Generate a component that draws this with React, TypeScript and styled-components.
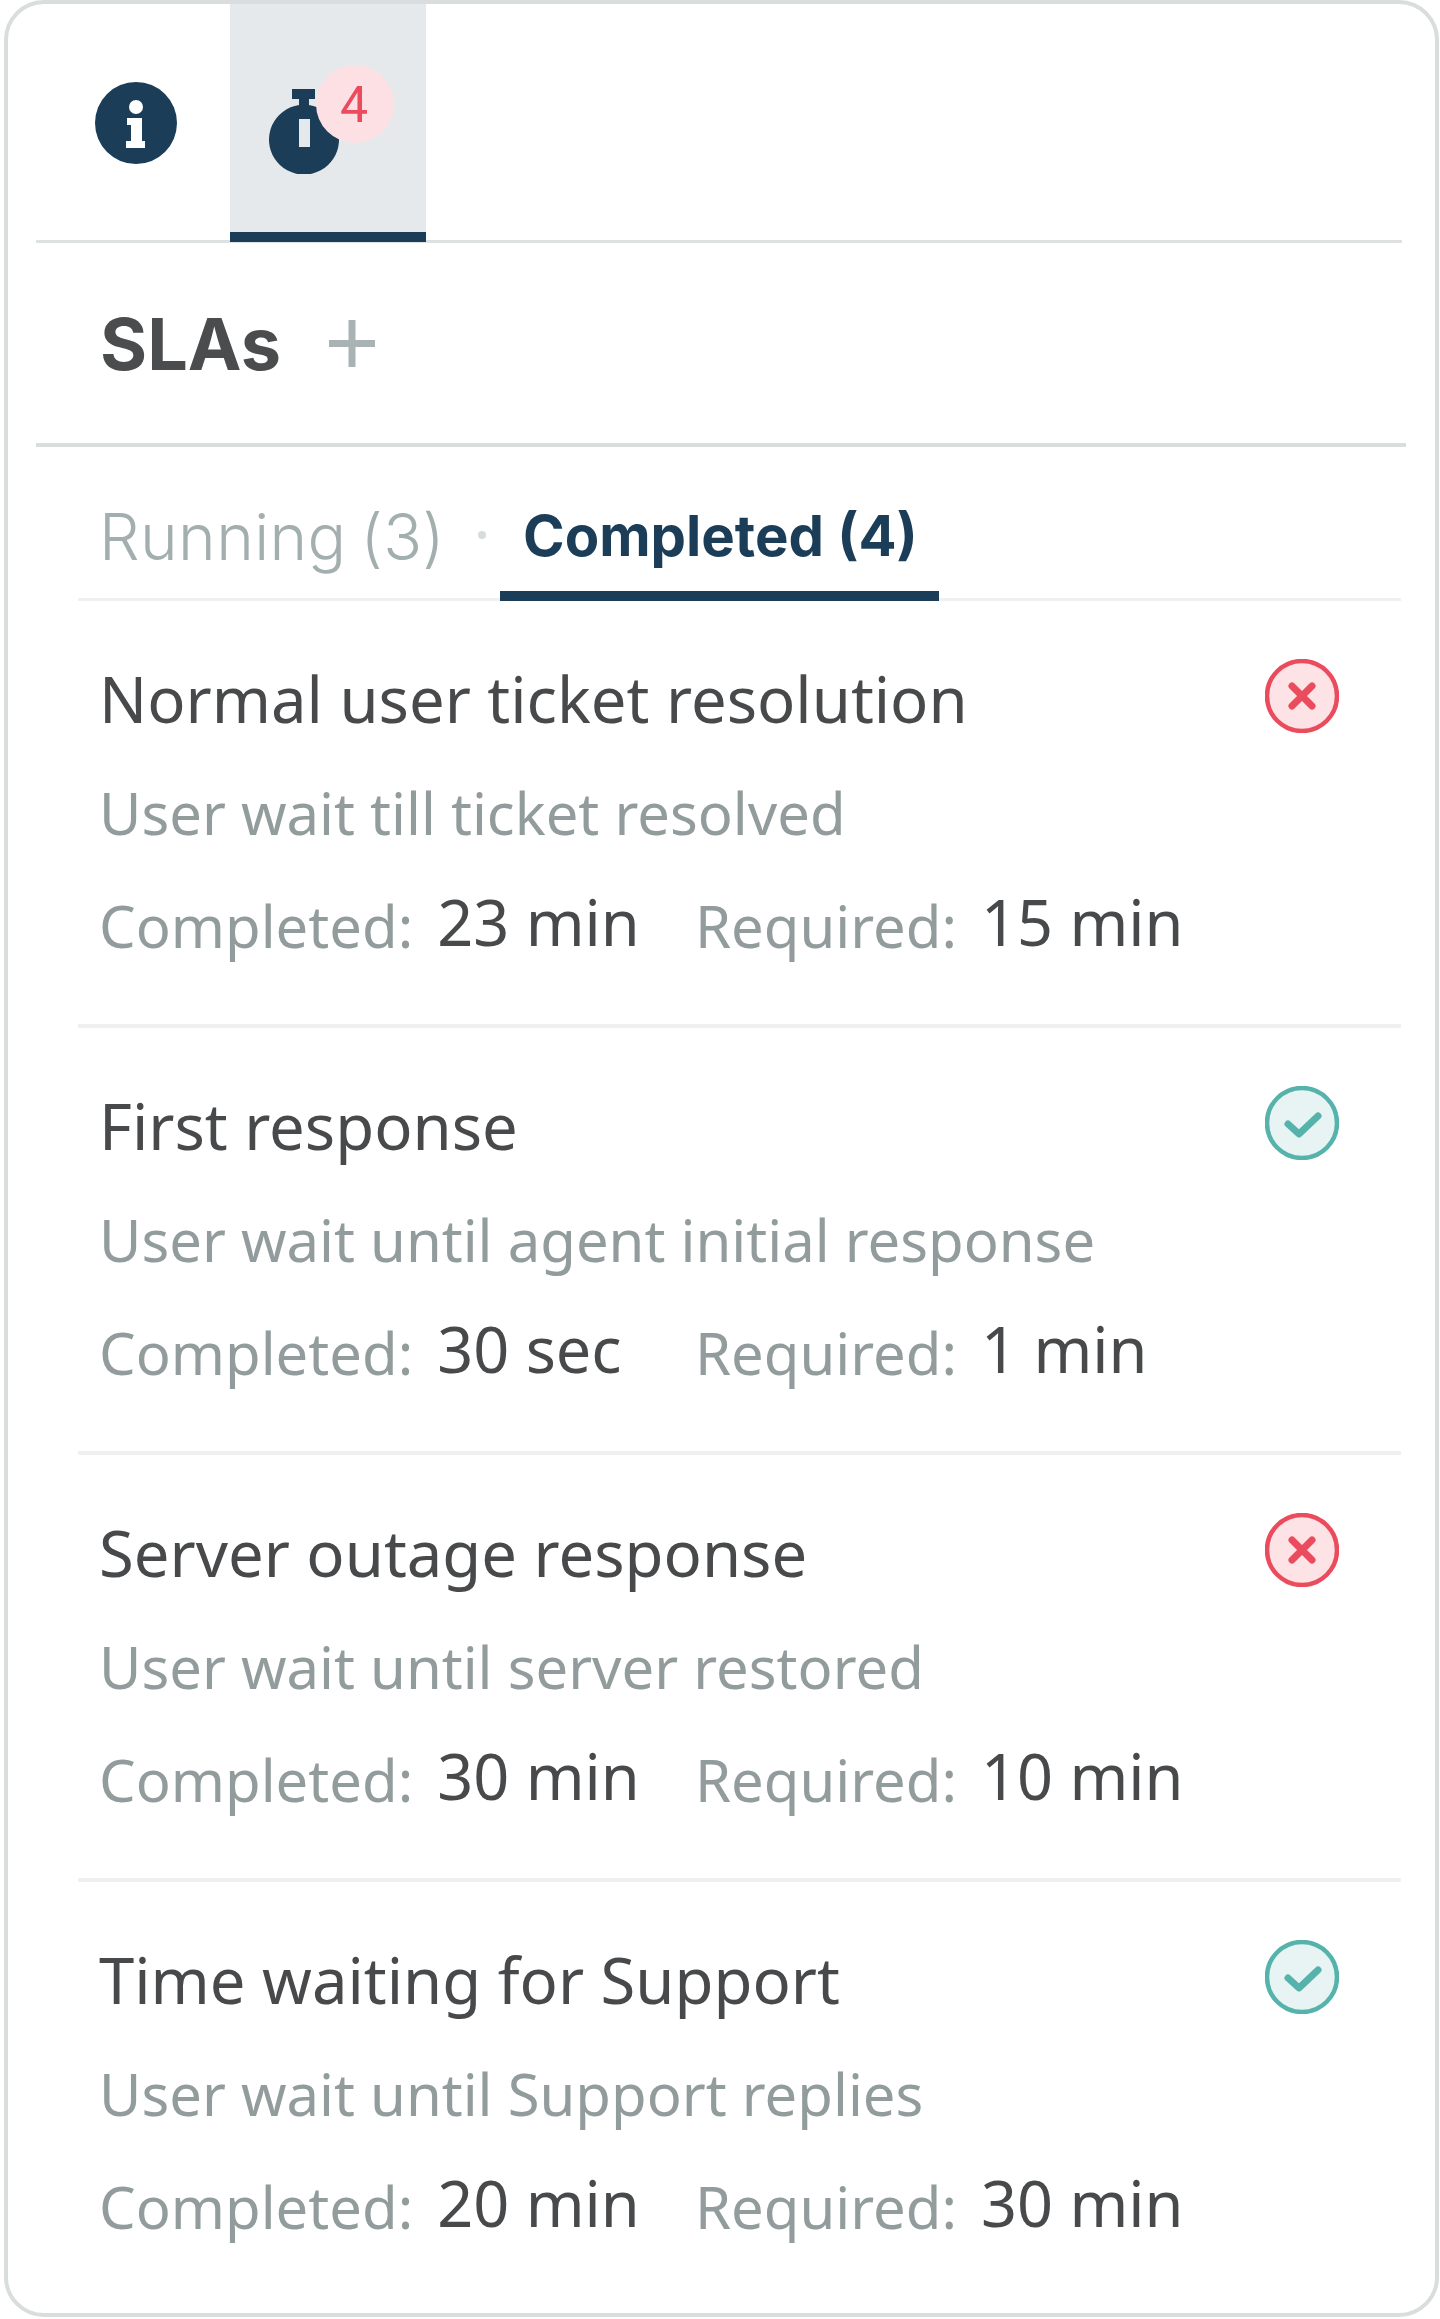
import React from "react";
import styled, { createGlobalStyle } from "styled-components";

const Global = createGlobalStyle`
  html, body { margin: 0; padding: 0; background: #fff; }
  * { box-sizing: border-box; }
`;

const Card = styled.div`
  width: 1435px;
  height: 2317px;
  margin-left: 4px;
  border: 4px solid #d9dddd;
  border-radius: 40px;
  background: #fff;
  padding: 0 29px 0 28px;
  font-family: "Noto Sans", sans-serif;
  overflow: hidden;
`;

const IconTabs = styled.div`
  display: flex;
  height: 239px;
  margin-right: 4px;
  border-bottom: 3px solid #dde1e1;
`;

const IconTab = styled.div<{ $active?: boolean }>`
  position: relative;
  flex: none;
  width: 196px;
  height: 238px;
  display: flex;
  align-items: center;
  background: ${(p) => (p.$active ? "#e6e9ec" : "transparent")};
  border-bottom: ${(p) => (p.$active ? "10px solid #1b3d57" : "none")};
`;

const InfoTab = styled(IconTab)`
  width: 194px;
  padding: 0 0 0 59px;
`;

const TimerTab = styled(IconTab)`
  padding: 26px 0 0 39px;
`;

const Badge = styled.span`
  position: absolute;
  left: 86px;
  top: 61px;
  width: 78px;
  height: 78px;
  padding-right: 2px;
  border-radius: 50%;
  background: #fde0e3;
  color: #ea4c5d;
  font-family: "Roboto", sans-serif;
  font-size: 50px;
  line-height: 80px;
  text-align: center;
`;

const HeadingRow = styled.div`
  display: flex;
  align-items: center;
  height: 204px;
  padding-left: 64px;
  gap: 48px;
  border-bottom: 4px solid #d9dddd;
`;

const Heading = styled.h2`
  margin: 0;
  font-family: "Inter", sans-serif;
  font-weight: 700;
  font-size: 72px;
  color: #4a4c4e;
`;

const SubTabs = styled.div`
  display: flex;
  align-items: flex-start;
  height: 154px;
  margin: 0 5px 0 42px;
  padding-left: 21px;
  border-bottom: 3px solid #eff1f1;
`;

const SubTab = styled.div`
  display: flex;
  align-items: center;
  height: 130px;
  margin-top: 24px;
  font-family: "Inter", sans-serif;
  font-size: 64px;
  font-weight: 300;
  letter-spacing: 0.4px;
  word-spacing: -4.500px;
  color: #a3aeae;
`;

const ActiveSubTab = styled.div`
  display: flex;
  align-items: center;
  height: 154px;
  padding: 32px 21px 0 23px;
  font-family: "Inter", sans-serif;
  font-size: 56.300px;
  font-weight: 700;
  color: #1b3d57;
  border-bottom: 10px solid #1b3d57;
`;

const Dot = styled.span`
  width: 8px;
  height: 8px;
  border-radius: 50%;
  background: #d7dcdc;
  margin: 84px 14px 0 33px;
`;

const List = styled.div`
  margin: 0 5px 0 42px;
`;

const Item = styled.div`
  position: relative;
  height: 427px;
  padding: 57px 0 0 21px;
  border-bottom: 4px solid #eff1f1;
  &:last-child { border-bottom: none; }
`;

const Title = styled.div`
  font-size: 63.400px;
  line-height: 82px;
  color: #47494b;
`;

const Sub = styled.div`
  margin-top: 36px;
  font-size: 58px;
  line-height: 74px;
  color: #939c9c;
`;

const Stats = styled.div`
  display: grid;
  grid-template-columns: 596px auto;
  margin-top: 37px;
`;

const Stat = styled.div`
  display: flex;
  align-items: baseline;
  gap: 24px;
`;

const Label = styled.span`
  font-size: 58px;
  line-height: 74px;
  color: #939c9c;
`;

const Value = styled.span`
  font-size: 63px;
  line-height: 74px;
  color: #47494b;
  position: relative;
  top: -2px;
`;

const StatusIcon = styled.svg`
  position: absolute;
  right: 62px;
  top: 58px;
  width: 74px;
  height: 74px;
`;

const InfoIcon = () => (
  <svg width="82" height="82" viewBox="0 0 82 82">
    <circle cx="41" cy="41" r="41" fill="#1b3d57" />
    <circle cx="41" cy="25" r="7" fill="#fff" />
    <path d="M32 36h15v23h3v7H31v-7h5V43h-4z" fill="#fff" />
  </svg>
);

const TimerIcon = () => (
  <svg width="70" height="85" viewBox="0 0 70 85">
    <path d="M23 0h23v10h-6v6A35 35 0 1 1 30 16v-6h-7z" fill="#1b3d57" />
    <rect x="30" y="30" width="11" height="28" fill="#e6e9ec" />
  </svg>
);

const FailIcon = () => (
  <StatusIcon viewBox="0 0 74 74">
    <circle cx="37" cy="37" r="35" fill="#fde3e5" stroke="#ea4c5d" strokeWidth="4.500" />
    <path d="M27 27l20 20M47 27L27 47" stroke="#ea4c5d" strokeWidth="7" strokeLinecap="round" />
  </StatusIcon>
);

const PassIcon = () => (
  <StatusIcon viewBox="0 0 74 74">
    <circle cx="37" cy="37" r="35" fill="#e7f4f3" stroke="#55b3ab" strokeWidth="4.500" />
    <path d="M23 38l11 10 19-18" fill="none" stroke="#55b3ab" strokeWidth="7" strokeLinecap="round" strokeLinejoin="round" />
  </StatusIcon>
);

type Sla = { title: string; sub: string; done: string; req: string; ok: boolean };

const data: Sla[] = [
  { title: "Normal user ticket resolution", sub: "User wait till ticket resolved", done: "23 min", req: "15 min", ok: false },
  { title: "First response", sub: "User wait until agent initial response", done: "30 sec", req: "1 min", ok: true },
  { title: "Server outage response", sub: "User wait until server restored", done: "30 min", req: "10 min", ok: false },
  { title: "Time waiting for Support", sub: "User wait until Support replies", done: "20 min", req: "30 min", ok: true },
];

export default function App() {
  return (
    <>
      <Global />
      <Card>
        <IconTabs>
          <InfoTab><InfoIcon /></InfoTab>
          <TimerTab $active>
            <TimerIcon />
            <Badge>4</Badge>
          </TimerTab>
        </IconTabs>
        <HeadingRow>
          <Heading>SLAs</Heading>
          <svg width="46" height="47" viewBox="0 0 46 47">
            <path d="M23 1v45M1 23.500h44" stroke="#a9b3b3" strokeWidth="7" strokeLinecap="round" />
          </svg>
        </HeadingRow>
        <SubTabs>
          <SubTab>Running (3)</SubTab>
          <Dot />
          <ActiveSubTab>Completed (4)</ActiveSubTab>
        </SubTabs>
        <List>
          {data.map((d) => (
            <Item key={d.title}>
              <Title>{d.title}</Title>
              <Sub>{d.sub}</Sub>
              <Stats>
                <Stat><Label>Completed:</Label><Value>{d.done}</Value></Stat>
                <Stat><Label>Required:</Label><Value>{d.req}</Value></Stat>
              </Stats>
              {d.ok ? <PassIcon /> : <FailIcon />}
            </Item>
          ))}
        </List>
      </Card>
    </>
  );
}
